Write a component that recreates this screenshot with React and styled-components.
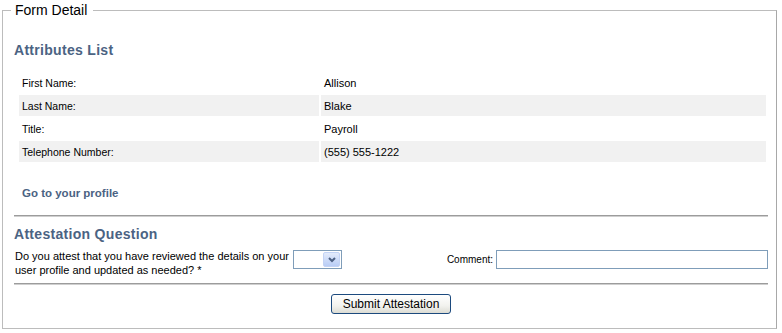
import React from 'react';
import styled, { createGlobalStyle } from 'styled-components';

const GlobalStyle = createGlobalStyle`
    body {
        margin: 0;
        background: #fff;
        font-family: "Liberation Sans", Arial, sans-serif;
        color: #000;
    }
`

const Page = styled.div`
    padding: 2px 5px 4px 2px;
`

const Fieldset = styled.fieldset`
    margin: 0;
    padding: 0 8px 14px 11px;
    border: 1px solid #bcbcbc;
    border-right-color: #a8a8a8;
    min-width: 0;
`

const Legend = styled.legend`
    margin-left: -3px;
    padding: 0 6px 0 4px;
    font-size: 14px;
    line-height: 16px;
    color: #000;
`

const SectionTitle = styled.h2`
    margin: ${props => props.$top}px 0 0;
    font-size: 14px;
    line-height: 16px;
    font-weight: bold;
    letter-spacing: 0.3px;
    color: #4b6383;
`

const AttrTable = styled.table`
    margin: 12px 0 0 3px;
    width: calc(100% - 3px);
    border-collapse: separate;
    border-spacing: 2px;
`

const Row = styled.tr`
    background: ${props => props.$shaded ? '#f1f1f1' : '#fff'};
`

const LabelCell = styled.td`
    width: 294px;
    height: 21px;
    padding: 0 3px;
    font-size: 10.5px;
    vertical-align: middle;
`

const ValueCell = styled.td`
    padding: 0 3px;
    font-size: 11px;
    vertical-align: middle;
`

const ProfileLink = styled.a`
    display: block;
    margin: 22px 0 0 8px;
    font-size: 11.5px;
    line-height: 14px;
    font-weight: bold;
    color: #4b6383;
    text-decoration: none;
`

const Rule = styled.div`
    margin-top: ${props => props.$top}px;
    border-top: 1px solid #9c9c9c;
    border-bottom: 1px solid #cfcfcf;
`

const QuestionRow = styled.div`
    display: flex;
    align-items: flex-start;
    margin-top: 7px;
`

const QuestionText = styled.div`
    width: 278px;
    padding-left: 1px;
    font-size: 11px;
    line-height: 14px;
`

const SelectBox = styled.div`
    box-sizing: border-box;
    width: 49px;
    height: 19px;
    margin-top: 1px;
    border: 1px solid #7f9db9;
    background: #fff;
    display: flex;
    justify-content: flex-end;
    align-items: center;
    padding-right: 1px;
`

const ArrowButton = styled.div`
    width: 17px;
    height: 15px;
    border-radius: 2px;
    background: linear-gradient(#e3ebfb, #b9cdf6);
    border: 1px solid #c3d3f5;
    box-sizing: border-box;
    display: flex;
    align-items: center;
    justify-content: center;
`

const CommentGroup = styled.div`
    margin-left: auto;
    margin-top: 1px;
    display: flex;
    align-items: center;
`

const CommentLabel = styled.label`
    font-size: 10px;
    margin-right: 3px;
`

const CommentInput = styled.input`
    box-sizing: border-box;
    width: 272px;
    height: 19px;
    margin: 0;
    border: 1px solid #7f9db9;
    padding: 0 2px;
    font-family: inherit;
    font-size: 11px;
    outline: none;
`

const ButtonRow = styled.div`
    display: flex;
    justify-content: center;
    margin-top: 9px;
`

const SubmitButton = styled.button`
    box-sizing: border-box;
    width: 120px;
    height: 20px;
    padding: 0;
    border: 1px solid #1c4a7e;
    border-radius: 3px;
    background: linear-gradient(#ffffff, #f2f2ee 60%, #dcdcd4);
    font-family: "Liberation Sans", Arial, sans-serif;
    font-size: 12px;
    color: #000;
`

const attributes = [
    ['First Name:', 'Allison'],
    ['Last Name:', 'Blake'],
    ['Title:', 'Payroll'],
    ['Telephone Number:', '(555) 555-1222'],
]

const App = () => {
    return (
        <Page>
            <GlobalStyle />
            <Fieldset>
                <Legend>Form Detail</Legend>
                <SectionTitle $top={24}>Attributes List</SectionTitle>
                <AttrTable>
                    <tbody>
                        {attributes.map(([label, value], i) => (
                            <Row key={label} $shaded={i % 2 === 1}>
                                <LabelCell>{label}</LabelCell>
                                <ValueCell>{value}</ValueCell>
                            </Row>
                        ))}
                    </tbody>
                </AttrTable>
                <ProfileLink href="#">Go to your profile</ProfileLink>
                <Rule $top={15} />
                <SectionTitle $top={9}>Attestation Question</SectionTitle>
                <QuestionRow>
                    <QuestionText>
                        Do you attest that you have reviewed the details on your user profile and updated as needed? *
                    </QuestionText>
                    <SelectBox>
                        <ArrowButton>
                            <svg width="8" height="6" viewBox="0 0 8 6">
                                <path d="M1 1 L4 4 L7 1" fill="none" stroke="#4d6185" strokeWidth="2" />
                            </svg>
                        </ArrowButton>
                    </SelectBox>
                    <CommentGroup>
                        <CommentLabel>Comment:</CommentLabel>
                        <CommentInput type="text" />
                    </CommentGroup>
                </QuestionRow>
                <Rule $top={6} />
                <ButtonRow>
                    <SubmitButton>Submit Attestation</SubmitButton>
                </ButtonRow>
            </Fieldset>
        </Page>
    )
}

export default App;
